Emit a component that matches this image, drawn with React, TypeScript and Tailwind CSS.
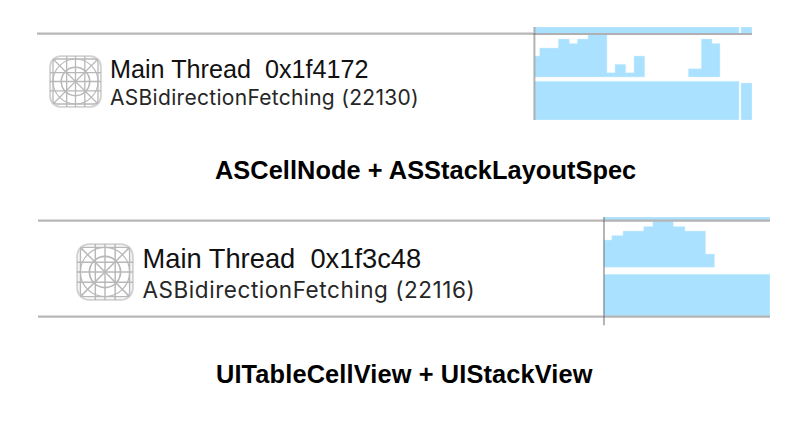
type IconProps = { className: string };

function AppGridIcon({ className }: IconProps) {
  return (
    <svg viewBox="0 0 57 57" className={className} fill="none" stroke="#b8b8b8" strokeWidth="1.4">
      <rect x="1.2" y="1.2" width="54.6" height="54.6" rx="11.5" stroke="#d2d2d2" strokeWidth="2" />
      <rect x="4.3" y="4.3" width="48.4" height="48.4" rx="4" />
      <path d="M19 1V56M28.5 1V56M38.5 1V56M1 19H56M1 28.5H56M1 38.5H56" />
      <path d="M4.3 4.3L52.7 52.7M52.7 4.3L4.3 52.7" />
      <circle cx="28.5" cy="28.5" r="15.3" strokeWidth="1.7" />
      <circle cx="28.5" cy="28.5" r="24.2" strokeWidth="1.2" />
    </svg>
  );
}

function FetchingChart() {
  return (
    <svg width="219" height="93" viewBox="533 27 219 93" className="block shrink-0">
      <g fill="#aae1fe" stroke="#d5f0ff" strokeWidth="0.5">
        <path d="M535 27H739V34H535ZM741 27H752V34H741Z" />
        <path d="M535 77V56H539.7V48H558.3V39H569.3V43.5H577.3V39H588V34H607V72.7H615V64.3H625.7V72.7H634V56H644.7V77Z" />
        <path d="M688.3 77V68.8H701.3V39H712V43.5H720V77Z" />
        <path d="M535 81.3H739V120H535ZM741 83H752V120H741Z" />
      </g>
      <path d="M533 34H752" stroke="#b0b0b4" strokeWidth="2.2" />
      <path d="M534.4 27V120" stroke="#666" strokeOpacity="0.5" strokeWidth="2" />
    </svg>
  );
}

function StackChart() {
  return (
    <svg width="167" height="109" viewBox="603 217 167 109" className="block shrink-0">
      <g fill="#aae1fe" stroke="#d5f0ff" strokeWidth="0.5">
        <path d="M604 217H770V221H604Z" />
        <path d="M604 267.2V240H611.8V235.4H623V231H643.7V226.5H652.8V221H673.3V226.5H685V231H705.6V254H714.5V267.2Z" />
        <path d="M604 274.3H770V316H604Z" />
      </g>
      <path d="M603 220.6H770M603 316.6H770" stroke="#b4b4b6" strokeWidth="2.2" />
      <path d="M603.9 217V325.3" stroke="#666" strokeOpacity="0.5" strokeWidth="2" />
    </svg>
  );
}

function Rule() {
  return (
    <svg width="100%" height="3" className="block">
      <path d="M0 1.6H600" stroke="#b7b7b7" strokeWidth="2.2" />
    </svg>
  );
}

export default function App() {
  return (
    <main className="flex h-[446px] w-[800px] flex-col overflow-hidden bg-white pt-[27px] font-['Liberation_Sans',Arial,sans-serif] text-[#111]">
      <section className="ml-[37px] flex h-[93px]">
        <div className="w-[496px] pt-[5.4px]">
          <Rule />
          <div className="flex pl-3 pt-[19.3px]">
            <AppGridIcon className="size-[53px] shrink-0" />
            <div className="ml-2 mt-[0.5px] whitespace-pre">
              <div className="h-7 text-[25.2px] leading-7">{"Main Thread  0x1f4172"}</div>
              <div className="h-7 font-[Inter,sans-serif] text-[21px] leading-[29px] tracking-[0.3px] text-[#262626]">
                ASBidirectionFetching (22130)
              </div>
            </div>
          </div>
        </div>
        <FetchingChart />
      </section>

      <h2 className="ml-[215px] mt-[35px] h-[30px] whitespace-nowrap text-[25.35px] font-bold leading-[30px] tracking-[0.06px] text-black">
        ASCellNode + ASStackLayoutSpec
      </h2>

      <section className="ml-[38px] mt-8 flex h-[109px]">
        <div className="w-[565px] pt-[2px]">
          <Rule />
          <div className="flex h-[93px] pl-[38px] pt-[21px]">
            <AppGridIcon className="size-[58px] shrink-0" />
            <div className="ml-[8.5px] whitespace-pre">
              <div className="h-[31px] text-[27.3px] leading-[31px]">{"Main Thread  0x1f3c48"}</div>
              <div className="h-[31px] font-[Inter,sans-serif] text-[22.5px] leading-[31px] tracking-[0.55px] text-[#262626]">
                ASBidirectionFetching (22116)
              </div>
            </div>
          </div>
          <Rule />
        </div>
        <StackChart />
      </section>

      <h2 className="ml-[216px] mt-[33px] h-[30px] whitespace-nowrap text-[25.35px] font-bold leading-[30px] tracking-[0.14px] text-black">
        UITableCellView + UIStackView
      </h2>
    </main>
  );
}
